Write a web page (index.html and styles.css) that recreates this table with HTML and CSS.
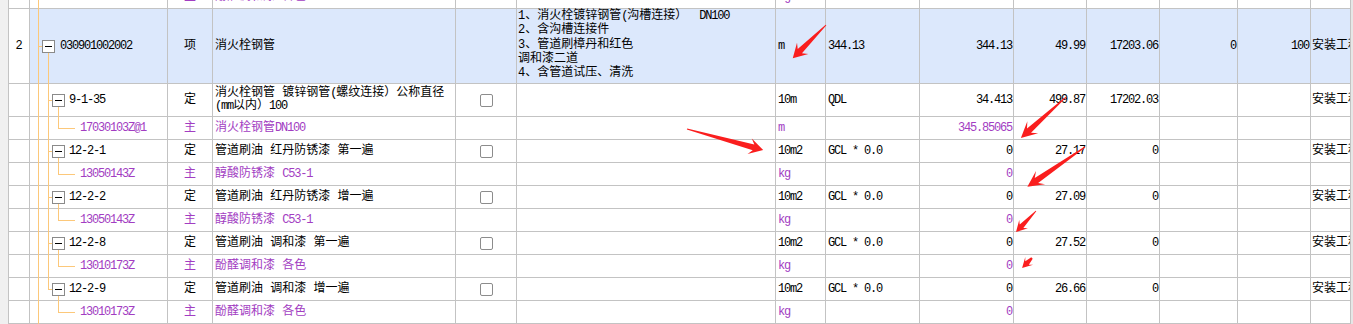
FILE: index.html
```html
<!DOCTYPE html>
<html lang="zh-CN">
<head>
<meta charset="utf-8">
<title>清单定额</title>
<link rel="stylesheet" href="styles.css">
</head>
<body>
<div class="screen">
  <div class="gutter"></div>
  <div class="viewport">
    <table class="grid">
      <colgroup>
        <col class="c1"><col class="c2"><col class="c3"><col class="c4"><col class="c5"><col class="c6"><col class="c7">
        <col class="c8"><col class="c9"><col class="c10"><col class="c11"><col class="c12"><col class="c13"><col class="c14">
      </colgroup>
      <tbody>
        <tr class="sub">
          <td class="rn"></td>
          <td class="tree l2"><i class="ln v0"></i></td>
          <td class="ty">主</td>
          <td class="nm">酚醛调和漆 各色</td>
          <td></td><td></td>
          <td class="un n">kg</td>
          <td></td>
          <td class="num n">0</td>
          <td></td><td></td><td></td><td></td><td class="pj"></td>
        </tr>
        <tr class="item big">
          <td class="rn">2</td>
          <td class="tree n"><i class="ln v0"></i><i class="ln h0"></i><i class="ln v1b"></i><i class="bx b0"></i>030901002002</td>
          <td class="ty">项</td>
          <td class="nm">消火栓钢管</td>
          <td></td>
          <td class="ds">1、消火栓镀锌钢管<span class="n">(</span>沟槽连接）<span class="n">&nbsp;&nbsp;DN100</span><br>2、含沟槽连接件<br>3、管道刷樟丹和红色<br>调和漆二道<br>4、含管道试压、清洗</td>
          <td class="un n">m</td>
          <td class="ex n">344.13</td>
          <td class="num n">344.13</td>
          <td class="num n">49.99</td>
          <td class="num n">17203.06</td>
          <td class="num n">0</td>
          <td class="num n">100</td>
          <td class="pj">安装工程</td>
        </tr>
        <tr class="two">
          <td class="rn"></td>
          <td class="tree l1 n"><i class="ln v0"></i><i class="ln v1"></i><i class="ln h1"></i><i class="ln v2b"></i><i class="bx b1"></i>9-1-35</td>
          <td class="ty">定</td>
          <td class="nm wrap">消火栓钢管 镀锌钢管<span class="n">(</span>螺纹连接）公称直径<span class="n">(mm</span>以内）<span class="n">100</span></td>
          <td class="ck"><i class="cb"></i></td>
          <td></td>
          <td class="un n">10m</td>
          <td class="ex n">QDL</td>
          <td class="num n">34.413</td>
          <td class="num n">499.87</td>
          <td class="num n">17202.03</td>
          <td></td><td></td>
          <td class="pj">安装工程</td>
        </tr>
        <tr class="sub">
          <td class="rn"></td>
          <td class="tree l2 n"><i class="ln v0"></i><i class="ln v1"></i><i class="ln v2t"></i><i class="ln h2"></i>17030103Z@1</td>
          <td class="ty">主</td>
          <td class="nm">消火栓钢管<span class="n">DN100</span></td>
          <td></td><td></td>
          <td class="un n">m</td>
          <td></td>
          <td class="num n">345.85065</td>
          <td></td><td></td><td></td><td></td><td class="pj"></td>
        </tr>
        <tr>
          <td class="rn"></td>
          <td class="tree l1 n"><i class="ln v0"></i><i class="ln v1"></i><i class="ln h1"></i><i class="ln v2b"></i><i class="bx b1"></i>12-2-1</td>
          <td class="ty">定</td>
          <td class="nm">管道刷油 红丹防锈漆 第一遍</td>
          <td class="ck"><i class="cb"></i></td>
          <td></td>
          <td class="un n">10m2</td>
          <td class="ex n">GCL * 0.0</td>
          <td class="num n">0</td>
          <td class="num n">27.17</td>
          <td class="num n">0</td>
          <td></td><td></td>
          <td class="pj">安装工程</td>
        </tr>
        <tr class="sub">
          <td class="rn"></td>
          <td class="tree l2 n"><i class="ln v0"></i><i class="ln v1"></i><i class="ln v2t"></i><i class="ln h2"></i>13050143Z</td>
          <td class="ty">主</td>
          <td class="nm">醇酸防锈漆 <span class="n">C53-1</span></td>
          <td></td><td></td>
          <td class="un n">kg</td>
          <td></td>
          <td class="num n">0</td>
          <td></td><td></td><td></td><td></td><td class="pj"></td>
        </tr>
        <tr>
          <td class="rn"></td>
          <td class="tree l1 n"><i class="ln v0"></i><i class="ln v1"></i><i class="ln h1"></i><i class="ln v2b"></i><i class="bx b1"></i>12-2-2</td>
          <td class="ty">定</td>
          <td class="nm">管道刷油 红丹防锈漆 增一遍</td>
          <td class="ck"><i class="cb"></i></td>
          <td></td>
          <td class="un n">10m2</td>
          <td class="ex n">GCL * 0.0</td>
          <td class="num n">0</td>
          <td class="num n">27.09</td>
          <td class="num n">0</td>
          <td></td><td></td>
          <td class="pj">安装工程</td>
        </tr>
        <tr class="sub">
          <td class="rn"></td>
          <td class="tree l2 n"><i class="ln v0"></i><i class="ln v1"></i><i class="ln v2t"></i><i class="ln h2"></i>13050143Z</td>
          <td class="ty">主</td>
          <td class="nm">醇酸防锈漆 <span class="n">C53-1</span></td>
          <td></td><td></td>
          <td class="un n">kg</td>
          <td></td>
          <td class="num n">0</td>
          <td></td><td></td><td></td><td></td><td class="pj"></td>
        </tr>
        <tr>
          <td class="rn"></td>
          <td class="tree l1 n"><i class="ln v0"></i><i class="ln v1"></i><i class="ln h1"></i><i class="ln v2b"></i><i class="bx b1"></i>12-2-8</td>
          <td class="ty">定</td>
          <td class="nm">管道刷油 调和漆 第一遍</td>
          <td class="ck"><i class="cb"></i></td>
          <td></td>
          <td class="un n">10m2</td>
          <td class="ex n">GCL * 0.0</td>
          <td class="num n">0</td>
          <td class="num n">27.52</td>
          <td class="num n">0</td>
          <td></td><td></td>
          <td class="pj">安装工程</td>
        </tr>
        <tr class="sub">
          <td class="rn"></td>
          <td class="tree l2 n"><i class="ln v0"></i><i class="ln v1"></i><i class="ln v2t"></i><i class="ln h2"></i>13010173Z</td>
          <td class="ty">主</td>
          <td class="nm">酚醛调和漆 各色</td>
          <td></td><td></td>
          <td class="un n">kg</td>
          <td></td>
          <td class="num n">0</td>
          <td></td><td></td><td></td><td></td><td class="pj"></td>
        </tr>
        <tr>
          <td class="rn"></td>
          <td class="tree l1 n"><i class="ln v0"></i><i class="ln v1t"></i><i class="ln h1"></i><i class="ln v2b"></i><i class="bx b1"></i>12-2-9</td>
          <td class="ty">定</td>
          <td class="nm">管道刷油 调和漆 增一遍</td>
          <td class="ck"><i class="cb"></i></td>
          <td></td>
          <td class="un n">10m2</td>
          <td class="ex n">GCL * 0.0</td>
          <td class="num n">0</td>
          <td class="num n">26.66</td>
          <td class="num n">0</td>
          <td></td><td></td>
          <td class="pj">安装工程</td>
        </tr>
        <tr class="sub">
          <td class="rn"></td>
          <td class="tree l2 n"><i class="ln v0"></i><i class="ln v2t"></i><i class="ln h2"></i>13010173Z</td>
          <td class="ty">主</td>
          <td class="nm">酚醛调和漆 各色</td>
          <td></td><td></td>
          <td class="un n">kg</td>
          <td></td>
          <td class="num n">0</td>
          <td></td><td></td><td></td><td></td><td class="pj"></td>
        </tr>
      </tbody>
    </table>
  </div>
  <div class="vscroll"></div>
  <svg class="marks" width="1353" height="324" viewBox="0 0 1353 324" aria-hidden="true">
    <g fill="#fa1e1e">
      <polygon transform="translate(826 25) rotate(135)" points="0,-0.5 37,-3 33,-8 47,0 33,8 37,3 0,0.5"/>
      <polygon transform="translate(1066 97) rotate(137.7)" points="0,-0.5 50,-3 45,-8 61,0 45,8 50,3 0,0.5"/>
      <polygon transform="translate(687 129) rotate(15.4)" points="0,-0.5 69,-3 65,-8 79,0 65,8 69,3 0,0.5"/>
      <polygon transform="translate(1085 147) rotate(145.4)" points="0,-0.5 59,-3 54,-8 70,0 54,8 59,3 0,0.5"/>
      <polygon transform="translate(1036 211) rotate(133.6)" points="0,-0.4 21,-2.5 18,-6 29,0 18,6 21,2.5 0,0.4"/>
      <polygon transform="translate(1032 258) rotate(135)" points="0,-1 7,-2.5 4,-5.5 14,0 4,5.5 7,2.5 0,1"/>
    </g>
  </svg>
</div>
</body>
</html>
```

FILE: styles.css
```css
* { box-sizing: border-box; }
body { margin: 0; background: #fff; }

.screen {
  position: relative;
  display: flex;
  width: 1353px;
  height: 324px;
  overflow: hidden;
  background: #fff;
}
.gutter { width: 8px; flex: none; background: #f0f0f0; }
.viewport { width: 1343px; flex: none; overflow: hidden; }
.vscroll { flex: 1; background: #e6e6e6; }

.grid {
  table-layout: fixed;
  border-collapse: separate;
  border-spacing: 0;
  width: 1343px;
  margin-top: -14px;
  border-left: 1px solid #c3c3c3;
  font-family: "Liberation Mono", "Noto Sans CJK SC", monospace;
  font-size: 12px;
  line-height: 14px;
  color: #000;
}
.c1 { width: 21px; }
.c2 { width: 138px; }
.c3 { width: 45px; }
.c4 { width: 243px; }
.c5 { width: 61px; }
.c6 { width: 259px; }
.c7 { width: 50px; }
.c8 { width: 94px; }
.c9 { width: 94px; }
.c10 { width: 73px; }
.c11 { width: 73px; }
.c12 { width: 78px; }
.c13 { width: 73px; }
.c14 { width: 40px; }

.grid td {
  height: 23px;
  padding: 0 1px 0 2px;
  border-right: 1px solid #c3c3c3;
  border-bottom: 1px solid #c3c3c3;
  vertical-align: middle;
  white-space: nowrap;
}
.grid tr.big td { height: 75px; }
.grid tr.two td { height: 33px; }

.grid tr.item td { background: #dce8fc; }
.grid tr.item td.rn { background: #fff; }
.grid tr.sub { color: #a23dc2; }

.n { letter-spacing: -1.2px; }

.grid td.rn { text-align: center; padding: 0; }
.grid td.ty { text-align: center; padding: 0; }
.grid td.nm { padding-left: 2px; }
.grid td.nm.wrap { white-space: normal; line-height: 13px; }
.grid td.ds { padding-left: 1px; vertical-align: top; line-height: 14.3px; }
.grid td.un { padding-left: 2px; }
.grid td.ex { padding-left: 2px; }
.grid td.num { text-align: right; padding-right: 1px; }
.grid td.ck { padding: 0; }
.grid td.pj { overflow: hidden; padding-left: 1px; }

.cb {
  display: block;
  width: 13px;
  height: 13px;
  margin: 0 auto;
  border: 1px solid #8c8c8c;
  border-radius: 2px;
  background: #fff;
}

/* tree column */
.grid td.tree { position: relative; padding-left: 30px; }
.grid td.tree.l1 { padding-left: 39px; }
.grid td.tree.l2 { padding-left: 50px; }

.ln { position: absolute; display: block; background: #fcc87a; }
.v0 { left: 8px; top: -1px; bottom: -1px; width: 1px; }
.v1 { left: 18px; top: -1px; bottom: -1px; width: 1px; }
.v1t { left: 18px; top: -1px; height: calc(50% + 1px); width: 1px; }
.v1b { left: 18px; top: 50%; bottom: -1px; width: 1px; }
.v2t { left: 28px; top: -1px; height: calc(50% + 1px); width: 1px; }
.v2b { left: 28px; top: 50%; bottom: -1px; width: 1px; }
.h0 { left: 8px; top: 50%; width: 4px; height: 1px; }
.h1 { left: 18px; top: 50%; width: 4px; height: 1px; }
.h2 { left: 28px; top: 50%; width: 17px; height: 1px; }

.bx {
  position: absolute;
  display: block;
  top: 50%;
  margin-top: -6px;
  width: 13px;
  height: 13px;
  border: 1px solid #8a8a8a;
  background: #fff;
}
.bx::after {
  content: "";
  position: absolute;
  left: 2px;
  right: 2px;
  top: 5px;
  height: 1px;
  background: #000;
}
.b0 { left: 12px; }
.b1 { left: 22px; }

.marks {
  position: absolute;
  left: 0;
  top: 0;
  pointer-events: none;
}
```
